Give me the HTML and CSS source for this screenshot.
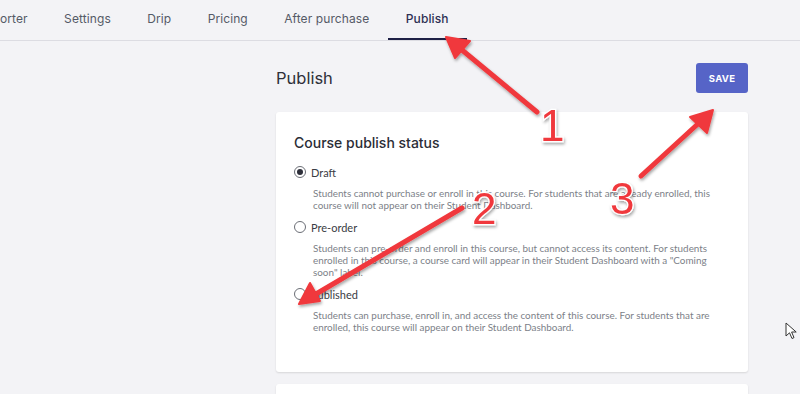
FILE: index.html
```html
<!DOCTYPE html>
<html>
<head>
<meta charset="utf-8">
<link rel="stylesheet" href="styles.css">
</head>
<body>
<div class="page">
  <nav class="tabs">
    <span class="tab cut">orter</span>
    <span class="tab">Settings</span>
    <span class="tab">Drip</span>
    <span class="tab">Pricing</span>
    <span class="tab">After purchase</span>
    <span class="tab active">Publish</span>
  </nav>
  <main class="content">
    <div class="head">
      <h1 class="title">Publish</h1>
      <button class="save">SAVE</button>
    </div>
    <section class="card">
      <h2 class="card-title">Course publish status</h2>
      <div class="option">
        <label class="opt-label"><span class="radio checked"></span>Draft</label>
        <p class="desc">Students cannot purchase or enroll in this course. For students that are already enrolled, this course will not appear on their Student Dashboard.</p>
      </div>
      <div class="option">
        <label class="opt-label"><span class="radio"></span>Pre-order</label>
        <p class="desc">Students can pre-order and enroll in this course, but cannot access its content. For students enrolled in this course, a course card will appear in their Student Dashboard with a "Coming soon" label.</p>
      </div>
      <div class="option">
        <label class="opt-label"><span class="radio"></span>Published</label>
        <p class="desc">Students can purchase, enroll in, and access the content of this course. For students that are enrolled, this course will appear on their Student Dashboard.</p>
      </div>
    </section>
    <section class="card next"></section>
  </main>
  <svg class="cursor" width="14" height="18" viewBox="0 0 14 18">
    <path d="M1 1 L1 14 L4.5 10.8 L7 16.5 L9 15.6 L6.6 10 L11.2 10 Z" fill="#fff" stroke="#333" stroke-width="1"/>
  </svg>
  <svg class="annot" width="800" height="394" viewBox="0 0 800 394">
    <defs>
      <filter id="sh" x="-20%" y="-20%" width="140%" height="140%">
        <feDropShadow dx="1" dy="2" stdDeviation="1.5" flood-color="#000" flood-opacity="0.35"/>
      </filter>
    </defs>
    <g fill="#f0393c" stroke="#f0393c" filter="url(#sh)">
      <line x1="537" y1="112" x2="462" y2="50" stroke-width="5" stroke-linecap="round"/>
      <polygon points="446,37 470,41 455,58" stroke-width="2" stroke-linejoin="round"/>
      <line x1="462" y1="208" x2="316" y2="294" stroke-width="5" stroke-linecap="round"/>
      <polygon points="299,304 310,283 320,301" stroke-width="2" stroke-linejoin="round"/>
      <line x1="641" y1="176" x2="700" y2="122" stroke-width="5" stroke-linecap="round"/>
      <polygon points="713,110 707,133 690,117" stroke-width="2" stroke-linejoin="round"/>
    </g>
    <g class="num" filter="url(#sh)">
      <text x="540" y="141">1</text>
      <text x="472" y="224">2</text>
      <text x="610" y="214">3</text>
    </g>
  </svg>
</div>
</body>
</html>
```
FILE: styles.css
```css
* { box-sizing: border-box; }
html, body { margin: 0; padding: 0; }
body {
  width: 800px;
  height: 394px;
  overflow: hidden;
  background: #f3f3f6;
  font-family: "Inter", "Liberation Sans", sans-serif;
}
.page { position: relative; width: 800px; height: 394px; overflow: hidden; }
.tabs {
  display: flex;
  height: 41px;
  border-bottom: 1px solid #dcdce2;
  margin-left: -8px;
}
.tab {
  font-size: 12px;
  color: #555a66;
  padding: 0 18.2px;
  line-height: 38px;
  height: 40px;
  border-bottom: 2px solid transparent;
  letter-spacing: 0.1px;
}
.tab.cut { padding-left: 8px; }
.tab.active { color: #2d3054; border-bottom-color: #1e2046; font-weight: 500; }
.content { padding: 0 52px 0 276px; }
.head {
  display: flex;
  justify-content: space-between;
  align-items: center;
  padding-top: 23px;
  height: 71px;
}
.title {
  margin: 0;
  font-size: 16.5px;
  font-weight: 400;
  color: #2e3039;
  margin-top: -21px;
}
.save {
  width: 52px;
  height: 30px;
  border: none;
  border-radius: 3px;
  background: #5664c7;
  color: #fff;
  font-family: "Inter", "Liberation Sans", sans-serif;
  font-size: 9.5px;
  font-weight: 700;
  letter-spacing: 0.3px;
  margin-top: -20px;
}
.card {
  background: #fff;
  border-radius: 3px;
  box-shadow: 0 1px 2px rgba(0,0,0,0.12);
  padding: 20px 18px 20px 18px;
  height: 260px;
}
.card.next { margin-top: 12px; height: 12px; padding: 0; }
.card-title {
  margin: 2px 0 13px;
  font-size: 14px;
  font-weight: 500;
  color: #2b2d36;
}
.option { margin-bottom: 8px; }
.opt-label {
  display: flex;
  align-items: center;
  font-family: "Lato", "Liberation Sans", sans-serif;
  font-size: 11px;
  color: #3a3c44;
  height: 16px;
}
.radio {
  width: 12px;
  height: 12px;
  border: 1px solid #6b6e76;
  border-radius: 50%;
  margin-right: 5px;
  position: relative;
  flex: none;
}
.radio.checked::after {
  content: "";
  position: absolute;
  left: 2px; top: 2px;
  width: 6px; height: 6px;
  border-radius: 50%;
  background: #2d2f3a;
}
.desc {
  margin: 7px 0 0 19px;
  font-family: "Lato", "Liberation Sans", sans-serif;
  font-size: 9.9px;
  line-height: 12px;
  color: #7c7f88;
  max-width: 405px;
}
.cursor { position: absolute; left: 785px; top: 322px; }
.annot { position: absolute; left: 0; top: 0; pointer-events: none; }
.num text {
  font-family: "Liberation Sans", sans-serif;
  font-size: 44px;
  font-weight: 400;
  fill: #f0393c;
  stroke: #fff;
  stroke-width: 2.5px;
  paint-order: stroke;
}
```
